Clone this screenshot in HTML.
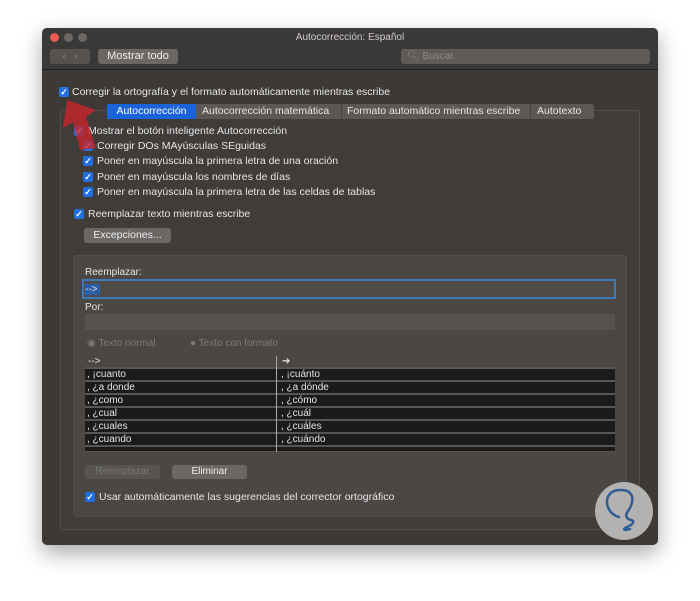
<!DOCTYPE html>
<html><head><meta charset="utf-8"><style>
*{margin:0;padding:0;box-sizing:border-box}
body{width:700px;height:601px;background:#fff;position:relative;overflow:hidden;font-family:"Liberation Sans",sans-serif;font-size:10px;color:#e6e6e6}
.a{position:absolute}
.win{left:42px;top:28px;width:616px;height:517px;background:#3c3936;border-radius:5px;box-shadow:0 8px 22px rgba(0,0,0,.35);overflow:hidden}
.tb{left:0;top:0;width:616px;height:42px;background:#3b3937;border-bottom:1px solid #1f1e1d}
.dot{width:9px;height:9px;border-radius:50%;top:5px}
.btn{background:#6a6765;border-radius:3px;color:#eee;text-align:center}
.cb{width:10px;height:10px;background:#1f6fe0;border-radius:2px;color:#fff;font-size:9px;line-height:10px;text-align:center;font-weight:bold}
.t{white-space:nowrap}
.row{left:85px;width:530px;height:12px;background:#1d1b1a;border-bottom:1px solid #555}
.row span{position:absolute;top:0;line-height:12px}
</style></head><body>
<div class="a win">
 <div class="a tb">
  <div class="a dot" style="left:8px;background:#ee5a52"></div>
  <div class="a dot" style="left:22px;background:#6b6866"></div>
  <div class="a dot" style="left:36px;background:#6b6866"></div>
  <div class="a t" style="left:0;width:616px;text-align:center;top:4px;color:#cfcccb">Autocorrección: Español</div>
  <div class="a btn" style="left:8px;top:21px;width:40px;height:15px;background:#555250;color:#888;line-height:15px">‹ &nbsp; ›</div>
  <div class="a btn" style="left:56px;top:21px;width:80px;height:15px;line-height:15px;font-size:11px">Mostrar todo</div>
  <div class="a" style="left:359px;top:21px;width:249px;height:15px;background:#5e5b59;border-radius:3px;color:#8d8a88;line-height:15px;padding-left:6px">&#x1F50D;&#xFE0E; Buscar</div>
 </div>
</div>
<div class="a cb" style="left:59px;top:87px">✓</div>
<div class="a t" style="left:72px;top:86px;font-size:10.5px">Corregir la ortografía y el formato automáticamente mientras escribe</div>
<div class="a" style="left:60px;top:110px;width:580px;height:420px;border:1px solid #4f4c4a;background:#3f3c3a;border-radius:3px"></div>
<div class="a" style="left:107px;top:104px;width:487px;height:15px;background:#5b5856;border-radius:2px"></div>
<div class="a t" style="left:107px;top:104px;width:89px;height:15px;background:#1b63d9;color:#fff;text-align:center;line-height:15px;font-size:10.5px">Autocorrección</div>
<div class="a t" style="left:202px;top:104px;line-height:15px;font-size:10.5px">Autocorrección matemática</div>
<div class="a t" style="left:347px;top:104px;line-height:15px;font-size:10.5px">Formato automático mientras escribe</div>
<div class="a t" style="left:537px;top:104px;line-height:15px;font-size:10.5px">Autotexto</div>
<div class="a" style="left:341px;top:104px;width:1px;height:15px;background:#444"></div>
<div class="a" style="left:530px;top:104px;width:1px;height:15px;background:#444"></div>
<div class="a cb" style="left:74px;top:126px">✓</div><div class="a t" style="left:88px;top:125px;font-size:10.5px">Mostrar el botón inteligente Autocorrección</div>
<div class="a cb" style="left:83px;top:141px">✓</div><div class="a t" style="left:97px;top:140px;font-size:10.5px">Corregir DOs MAyúsculas SEguidas</div>
<div class="a cb" style="left:83px;top:156px">✓</div><div class="a t" style="left:97px;top:155px;font-size:10.5px">Poner en mayúscula la primera letra de una oración</div>
<div class="a cb" style="left:83px;top:172px">✓</div><div class="a t" style="left:97px;top:171px;font-size:10.5px">Poner en mayúscula los nombres de días</div>
<div class="a cb" style="left:83px;top:187px">✓</div><div class="a t" style="left:97px;top:186px;font-size:10.5px">Poner en mayúscula la primera letra de las celdas de tablas</div>
<div class="a cb" style="left:74px;top:209px">✓</div><div class="a t" style="left:88px;top:208px;font-size:10.5px">Reemplazar texto mientras escribe</div>
<div class="a btn" style="left:84px;top:228px;width:87px;height:15px;line-height:15px;font-size:10.5px">Excepciones...</div>
<div class="a" style="left:73px;top:255px;width:554px;height:262px;border:1px solid #504d4b;background:#4a4745;border-radius:3px"></div>
<div class="a t" style="left:85px;top:267px">Reemplazar:</div>
<div class="a" style="left:82px;top:279px;width:534px;height:20px;border:2px solid #3b7bb8;background:#4e4b49"></div>
<div class="a" style="left:85px;top:284px;width:15px;height:11px;background:#2c5fa6;line-height:11px">--&gt;</div>
<div class="a t" style="left:85px;top:302px">Por:</div>
<div class="a" style="left:85px;top:314px;width:530px;height:16px;background:#555250"></div>
<div class="a t" style="left:87px;top:338px;color:#7d7a78">◉ Texto normal</div>
<div class="a t" style="left:190px;top:338px;color:#7d7a78">● Texto con formato</div>
<div class="a" style="left:85px;top:356px;width:530px;height:96px;background:#5a5755"></div>
<div class="a row" style="top:356px;background:#4a4745"><span style="left:3px">--&gt;</span><span style="left:197px">➔</span></div>
<div class="a row" style="top:369px"><span style="left:2px">, ¡cuanto</span><span style="left:196px">, ¡cuánto</span></div>
<div class="a row" style="top:382px"><span style="left:2px">, ¿a donde</span><span style="left:196px">, ¿a dónde</span></div>
<div class="a row" style="top:395px"><span style="left:2px">, ¿como</span><span style="left:196px">, ¿cómo</span></div>
<div class="a row" style="top:408px"><span style="left:2px">, ¿cual</span><span style="left:196px">, ¿cuál</span></div>
<div class="a row" style="top:421px"><span style="left:2px">, ¿cuales</span><span style="left:196px">, ¿cuáles</span></div>
<div class="a row" style="top:434px"><span style="left:2px">, ¿cuando</span><span style="left:196px">, ¿cuándo</span></div>
<div class="a row" style="top:447px;height:5px"></div>
<div class="a" style="left:276px;top:356px;width:1px;height:96px;background:#aaa"></div>
<div class="a btn" style="left:85px;top:465px;width:75px;height:14px;background:#575452;color:#777;line-height:14px">Reemplazar</div>
<div class="a btn" style="left:172px;top:465px;width:75px;height:14px;line-height:14px">Eliminar</div>
<div class="a cb" style="left:85px;top:492px">✓</div>
<div class="a t" style="left:99px;top:491px;font-size:10.5px">Usar automáticamente las sugerencias del corrector ortográfico</div>
<svg class="a" style="left:0;top:0" width="120" height="160"><polygon points="67,100 96,110 86,117 96,148 80,150 73,122 63,128" fill="#c8262a" opacity=".8"/></svg>
<svg class="a" style="left:594px;top:481px" width="60" height="60"><circle cx="30" cy="30" r="29" fill="#b3b2b0"/><path d="M25 36 C10 32 8 10 25 9 C42 8 40 22 34 30 C31 34 32 38 37 39 C42 40 38 44 33 46 C28 48 30 50 36 48" fill="none" stroke="#2e5c95" stroke-width="2.5" stroke-linecap="round"/></svg>
</body></html>
